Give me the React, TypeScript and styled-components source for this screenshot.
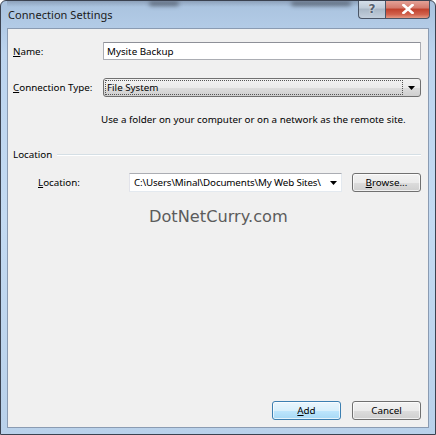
import React from "react";
import styled, { createGlobalStyle, css } from "styled-components";

const Global = createGlobalStyle`
  html, body { margin: 0; padding: 0; background: #ffffff; }
  body { width: 436px; height: 435px; overflow: hidden; }
  * { box-sizing: border-box; }
`;

const UI = `"Noto Sans", "Liberation Sans", sans-serif`;

const Window = styled.div`
  width: 436px;
  height: 435px;
  display: flex;
  flex-direction: column;
  padding: 0 6px 6px 6px;
  border: 1px solid #3b4250;
  border-radius: 6px 6px 0 0;
  background: linear-gradient(180deg, #a9c2de 0%, #bcd4ee 12%, #c3daf2 50%, #b9d1ea 100%);
  position: relative;
  overflow: hidden;
  font-family: ${UI};
`;

const TitleBar = styled.div`
  height: 27px;
  flex: none;
  display: flex;
  align-items: flex-start;
  justify-content: space-between;
  position: relative;
  background: linear-gradient(180deg, rgba(90,100,120,0.35) 0px, rgba(255,255,255,0) 6px);
`;

const Smudge = styled.div<{ $left: number; $width: number }>`
  position: absolute;
  top: 0;
  left: ${(p) => p.$left}px;
  width: ${(p) => p.$width}px;
  height: 5px;
  border-radius: 3px;
  background: rgba(40, 45, 55, 0.55);
  filter: blur(2px);
`;

const Title = styled.div`
  font-family: ${UI};
  font-size: 11px;
  color: #1b1b1b;
  padding-top: 6px;
  padding-left: 1px;
  letter-spacing: 0.05px;
`;

const Caption = styled.div`
  display: flex;
  margin-right: -1px;
  margin-top: -1px;
`;

const CapButton = styled.div<{ $kind: "help" | "close" }>`
  height: 19px;
  display: flex;
  align-items: center;
  justify-content: center;
  border: 1px solid #4a5566;
  border-top: none;
  ${(p) =>
    p.$kind === "help"
      ? css`
          width: 27px;
          border-radius: 0 0 0 4px;
          border-right: none;
          background: linear-gradient(180deg, #d7e1ec 0%, #bfcbd8 45%, #a9b7c6 50%, #c3cfdc 100%);
          color: #55606e;
          font-family: "DejaVu Sans", sans-serif;
          font-weight: bold;
          font-size: 12px;
          text-shadow: 0 0 2px #fff;
        `
      : css`
          width: 45px;
          border-radius: 0 0 4px 0;
          background: linear-gradient(180deg, #e6a79d 0%, #d47a6c 45%, #c0402c 50%, #d1614c 80%, #e59a85 100%);
        `}
`;

const Client = styled.div`
  flex: 1;
  display: flex;
  flex-direction: column;
  background: #f0f0f0;
  border: 1px solid #8a9bb2;
  padding: 13px 7px 7px 5px;
  font-family: ${UI};
  font-size: 9.8px;
  color: #000;
`;

const FormGrid = styled.div`
  display: grid;
  grid-template-columns: 90px 1fr;
  row-gap: 18px;
  align-items: center;
`;

const Label = styled.label<{ $indent?: number; $width?: number }>`
  padding-left: ${(p) => p.$indent ?? 0}px;
  ${(p) => (p.$width ? `width: ${p.$width}px; flex: none;` : "")}
  white-space: nowrap;
  u { text-decoration: underline; text-underline-offset: 1px; }
`;

const TextBox = styled.div`
  height: 18px;
  background: #fff;
  border: 1px solid #abadb3;
  border-top-color: #8e9098;
  border-radius: 1px;
  display: flex;
  align-items: center;
  padding-left: 3px;
`;

const Arrow = () => (
  <svg width="7" height="4" viewBox="0 0 7 4">
    <path d="M0 0H7L3.5 4Z" fill="#000" />
  </svg>
);

const DropList = styled.div`
  height: 19px;
  border: 1px solid #707070;
  border-radius: 3px;
  background: linear-gradient(180deg, #f2f2f2 0%, #ebebeb 50%, #dddddd 51%, #cfcfcf 100%);
  display: flex;
  align-items: center;
  padding: 1px;
`;

const Focus = styled.div`
  flex: 1;
  height: 100%;
  border: 1px dotted #555;
  display: flex;
  align-items: center;
  padding-left: 1px;
`;

const ArrowBox = styled.div<{ $w: number }>`
  width: ${(p) => p.$w}px;
  flex: none;
  display: flex;
  align-items: center;
  justify-content: center;
`;

const Hint = styled.div`
  margin: 16px 0 0 88px;
  line-height: 14px;
`;

const GroupHeader = styled.div`
  margin-top: 21px;
  display: flex;
  align-items: center;
  gap: 5px;
  line-height: 14px;
`;

const Rule = styled.div`
  flex: 1;
  height: 2px;
  border-top: 1px solid #d5dfe5;
  border-bottom: 1px solid #ffffff;
`;

const LocationRow = styled.div`
  margin-top: 11px;
  display: flex;
  align-items: center;
`;

const Combo = styled.div`
  width: 213px;
  height: 19px;
  background: #fff;
  border: 1px solid #e3e9ef;
  border-top-color: #abadb3;
  border-left-color: #e2e3ea;
  display: flex;
  align-items: center;
  padding-left: 4px;
  white-space: nowrap;
  overflow: hidden;
`;

const ComboText = styled.span`
  flex: 1;
  overflow: hidden;
  letter-spacing: -0.15px;
`;

const Button = styled.div<{ $default?: boolean }>`
  width: 69px;
  height: 19px;
  display: flex;
  align-items: center;
  justify-content: center;
  border-radius: 3px;
  border: 1px solid ${(p) => (p.$default ? "#3c7fb1" : "#707070")};
  background: ${(p) =>
    p.$default
      ? "linear-gradient(180deg, #eaf6fd 0%, #d9f0fc 50%, #bee6fd 51%, #a7d9f5 100%)"
      : "linear-gradient(180deg, #f2f2f2 0%, #ebebeb 50%, #dddddd 51%, #cfcfcf 100%)"};
  box-shadow: inset 0 0 0 1px rgba(255, 255, 255, 0.7);
  u { text-decoration: underline; text-underline-offset: 1px; }
`;

const Watermark = styled.div`
  margin: 15px 0 0 136px;
  font-family: "DejaVu Sans", Verdana, sans-serif;
  font-size: 16.2px;
  line-height: 20px;
  color: #5c5c5c;
`;

const Spacer = styled.div`
  flex: 1;
`;

const Footer = styled.div`
  display: flex;
  justify-content: flex-end;
  gap: 11px;
`;

export default function App() {
  return (
    <>
      <Global />
      <Window>
        <Smudge $left={148} $width={30} />
        <Smudge $left={290} $width={60} />
        <TitleBar>
          <Title>Connection Settings</Title>
          <Caption>
            <CapButton $kind="help">?</CapButton>
            <CapButton $kind="close">
              <svg width="12" height="10" viewBox="0 0 12 10">
                <path
                  d="M1.5 1 L10.5 9 M10.5 1 L1.5 9"
                  stroke="#ffffff"
                  strokeWidth="2.6"
                  strokeLinecap="square"
                />
              </svg>
            </CapButton>
          </Caption>
        </TitleBar>
        <Client>
          <FormGrid>
            <Label>
              <u>N</u>ame:
            </Label>
            <TextBox>Mysite Backup</TextBox>
            <Label>
              <u>C</u>onnection Type:
            </Label>
            <DropList>
              <Focus>File System</Focus>
              <ArrowBox $w={16}>
                <Arrow />
              </ArrowBox>
            </DropList>
          </FormGrid>
          <Hint>Use a folder on your computer or on a network as the remote site.</Hint>
          <GroupHeader>
            Location
            <Rule />
          </GroupHeader>
          <LocationRow>
            <Label $indent={25} $width={116}>
              <u>L</u>ocation:
            </Label>
            <Combo>
              <ComboText>C:\Users\Minal\Documents\My Web Sites\</ComboText>
              <ArrowBox $w={16}>
                <Arrow />
              </ArrowBox>
            </Combo>
            <Spacer />
            <Button>
              <u>B</u>rowse...
            </Button>
          </LocationRow>
          <Watermark>DotNetCurry.com</Watermark>
          <Spacer />
          <Footer>
            <Button $default>
              <u>A</u>dd
            </Button>
            <Button>Cancel</Button>
          </Footer>
        </Client>
      </Window>
    </>
  );
}
